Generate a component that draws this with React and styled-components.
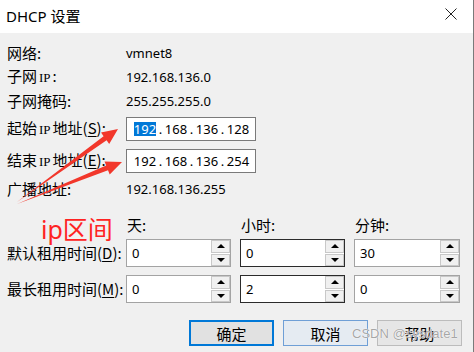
import { createGlobalStyle, css, styled } from "styled-components";

const GlobalStyle = createGlobalStyle`
  html, body {
    margin: 0;
    padding: 0;
    background: #f0f0f0;
  }
  body {
    font-family: "Noto Sans", "Noto Sans CJK SC", sans-serif;
    color: #000;
  }
`;

const Window = styled.div`
  position: relative;
  width: 474px;
  height: 352px;
  overflow: hidden;
  background: #f0f0f0;
  border-right: 1px solid #7a7a7a;
  box-sizing: border-box;
`;

const TitleBar = styled.div`
  height: 33px;
  background: #fff;
  display: flex;
  align-items: center;
  justify-content: space-between;
  padding: 0 16px 0 6px;
`;

const Title = styled.div`
  font-family: "Noto Sans", "Noto Sans CJK SC", sans-serif;
  font-size: 15px;
  line-height: 20px;
  margin-top: -2px;
`;

const CloseIcon = styled.svg`
  width: 12px;
  height: 12px;
  margin-top: -5px;
`;

const Body = styled.div`
  padding: 8px 11px 0 7px;
`;

const Row = styled.div`
  display: grid;
  grid-template-columns: 119px 1fr;
  align-items: center;
  height: ${props => props.h || 24}px;
  margin-top: ${props => props.mt || 0}px;
`;

const Label = styled.div`
  font-family: "Noto Sans CJK SC", sans-serif;
  font-size: 15px;
  line-height: 20px;
  white-space: nowrap;
  u {
    text-decoration-thickness: 1px;
    text-underline-offset: 2px;
  }
`;

const Small = styled.span`
  font-family: "Liberation Serif", serif;
  font-size: 13px;
  margin: 0 2px;
`;

const Value = styled.div`
  font-size: 13px;
  line-height: 18px;
`;

const IpBox = styled.div`
  width: 130px;
  height: 24px;
  box-sizing: border-box;
  border: 1px solid #7a7a7a;
  background: #fff;
  display: flex;
  align-items: center;
  padding-left: 7px;
  font-size: 13px;
`;

const IpPart = styled.span`
  width: 22px;
  height: 14px;
  line-height: 14px;
  display: inline-flex;
  justify-content: center;
  ${props => props.selected && css`
    background: #0078d7;
    color: #fff;
  `}
`;

const IpDot = styled.span`
  width: 9px;
  text-align: center;
`;

const TimeGrid = styled.div`
  display: grid;
  grid-template-columns: 110px 105px 105px 106px;
  grid-template-rows: 26px 28px 28px;
  column-gap: 9px;
  row-gap: 8px;
  align-items: center;
`;

const ColHead = styled.div`
  font-family: "Noto Sans CJK SC", sans-serif;
  font-size: 15px;
  line-height: 20px;
  padding-left: 1px;
  align-self: end;
  margin-bottom: -4px;
`;

const SpinBox = styled.div`
  display: flex;
  height: 28px;
`;

const SpinInput = styled.div`
  flex: 1;
  box-sizing: border-box;
  border: 1px solid ${props => (props.dark ? "#2b2b2b" : "#a3a3a3")};
  border-right: none;
  background: #fff;
  font-size: 13px;
  padding: 4px 0 0 5px;
`;

const Spinner = styled.div`
  width: 20px;
  display: flex;
  flex-direction: column;
  gap: 1px;
  box-sizing: border-box;
  border: 1px solid ${props => (props.dark ? "#2b2b2b" : "#a3a3a3")};
  border-left: none;
  background: #fff;
`;

const SpinBtn = styled.div`
  flex: 1;
  border: 1px solid #c8c8c8;
  background: #f0f0f0;
  display: flex;
  align-items: center;
  justify-content: center;
`;

const Tri = styled.span`
  width: 0;
  height: 0;
  border-left: 4px solid transparent;
  border-right: 4px solid transparent;
  ${props => props.down
    ? css`border-top: 4px solid #000;`
    : css`border-bottom: 4px solid #000;`}
`;

const ButtonRow = styled.div`
  display: flex;
  justify-content: flex-end;
  gap: 9px;
  margin-top: 17px;
`;

const DlgButton = styled.div`
  width: 85px;
  height: 26px;
  box-sizing: border-box;
  display: flex;
  align-items: center;
  justify-content: center;
  font-family: "Noto Sans CJK SC", sans-serif;
  font-size: 15px;
  border: 1px solid #adadad;
  background: #e1e1e1;
  ${props => props.variant === "default" && css`
    border: 2px solid #0078d7;
    background: #e1e1e1;
  `}
  ${props => props.variant === "hover" && css`
    border: 1px solid #6f9fd6;
    background: #e5ebf2;
  `}
  ${props => props.variant === "plain" && css`
    border: 1px solid #bcbcbc;
    background: #e6e6e6;
  `}
`;

const Arrows = styled.svg`
  position: absolute;
  left: 0;
  top: 0;
  width: 474px;
  height: 352px;
  pointer-events: none;
`;

const Annotation = styled.div`
  position: absolute;
  left: 41px;
  top: 215px;
  font-family: "Noto Sans", "Noto Sans CJK SC", sans-serif;
  font-size: 25px;
  line-height: 28px;
  color: #ff2323;
`;

const Watermark = styled.div`
  position: absolute;
  left: 352px;
  top: 326px;
  font-family: "Liberation Sans", Arial, sans-serif;
  font-size: 13px;
  line-height: 16px;
  color: rgba(150, 150, 150, 0.85);
  text-shadow: 0 0 1px #fff, 0 0 1px #fff;
`;

function IpField({ parts, selectFirst }) {
  return (
    <IpBox>
      {parts.map((p, i) => (
        <span key={i} style={{ display: "contents" }}>
          {i > 0 && <IpDot>.</IpDot>}
          <IpPart selected={selectFirst && i === 0}>{p}</IpPart>
        </span>
      ))}
    </IpBox>
  );
}

function Spin({ value, dark }) {
  return (
    <SpinBox>
      <SpinInput dark={dark}>{value}</SpinInput>
      <Spinner dark={dark}>
        <SpinBtn><Tri /></SpinBtn>
        <SpinBtn><Tri down /></SpinBtn>
      </Spinner>
    </SpinBox>
  );
}

export default function App() {
  return (
    <>
      <GlobalStyle />
      <Window>
        <TitleBar>
          <Title>DHCP 设置</Title>
          <CloseIcon viewBox="0 0 12 12">
            <path d="M0.5 0.5 L11.5 11.5 M11.5 0.5 L0.5 11.5" stroke="#222" strokeWidth="1" fill="none" />
          </CloseIcon>
        </TitleBar>
        <Body>
          <Row>
            <Label>网络:</Label>
            <Value>vmnet8</Value>
          </Row>
          <Row>
            <Label>子网<Small>IP</Small>:</Label>
            <Value>192.168.136.0</Value>
          </Row>
          <Row>
            <Label>子网掩码:</Label>
            <Value>255.255.255.0</Value>
          </Row>
          <Row mt={4}>
            <Label>起始<Small>IP</Small>地址(<u>S</u>):</Label>
            <IpField parts={["192", "168", "136", "128"]} selectFirst />
          </Row>
          <Row mt={8}>
            <Label>结束<Small>IP</Small>地址(<u>E</u>):</Label>
            <IpField parts={["192", "168", "136", "254"]} />
          </Row>
          <Row h={32}>
            <Label>广播地址:</Label>
            <Value>192.168.136.255</Value>
          </Row>
          <TimeGrid>
            <div />
            <ColHead>天:</ColHead>
            <ColHead>小时:</ColHead>
            <ColHead>分钟:</ColHead>

            <Label>默认租用时间(<u>D</u>):</Label>
            <Spin value="0" />
            <Spin value="0" dark />
            <Spin value="30" />

            <Label>最长租用时间(<u>M</u>):</Label>
            <Spin value="0" />
            <Spin value="2" dark />
            <Spin value="0" />
          </TimeGrid>
          <ButtonRow>
            <DlgButton variant="default">确定</DlgButton>
            <DlgButton variant="hover">取消</DlgButton>
            <DlgButton variant="plain">帮助</DlgButton>
          </ButtonRow>
        </Body>

        <Annotation>ip区间</Annotation>
        <Arrows viewBox="0 0 474 352">
          <polygon points="17,202 106.6,140.3 109.2,144 118,129 101,132.6 103.6,136.3" fill="#f2372b" />
          <polygon points="17,204 108,170.2 109.7,174.4 122,162 104.5,161.4 106.2,165.6" fill="#f2372b" />
        </Arrows>
        <Watermark>CSDN @sysdate1</Watermark>
      </Window>
    </>
  );
}
